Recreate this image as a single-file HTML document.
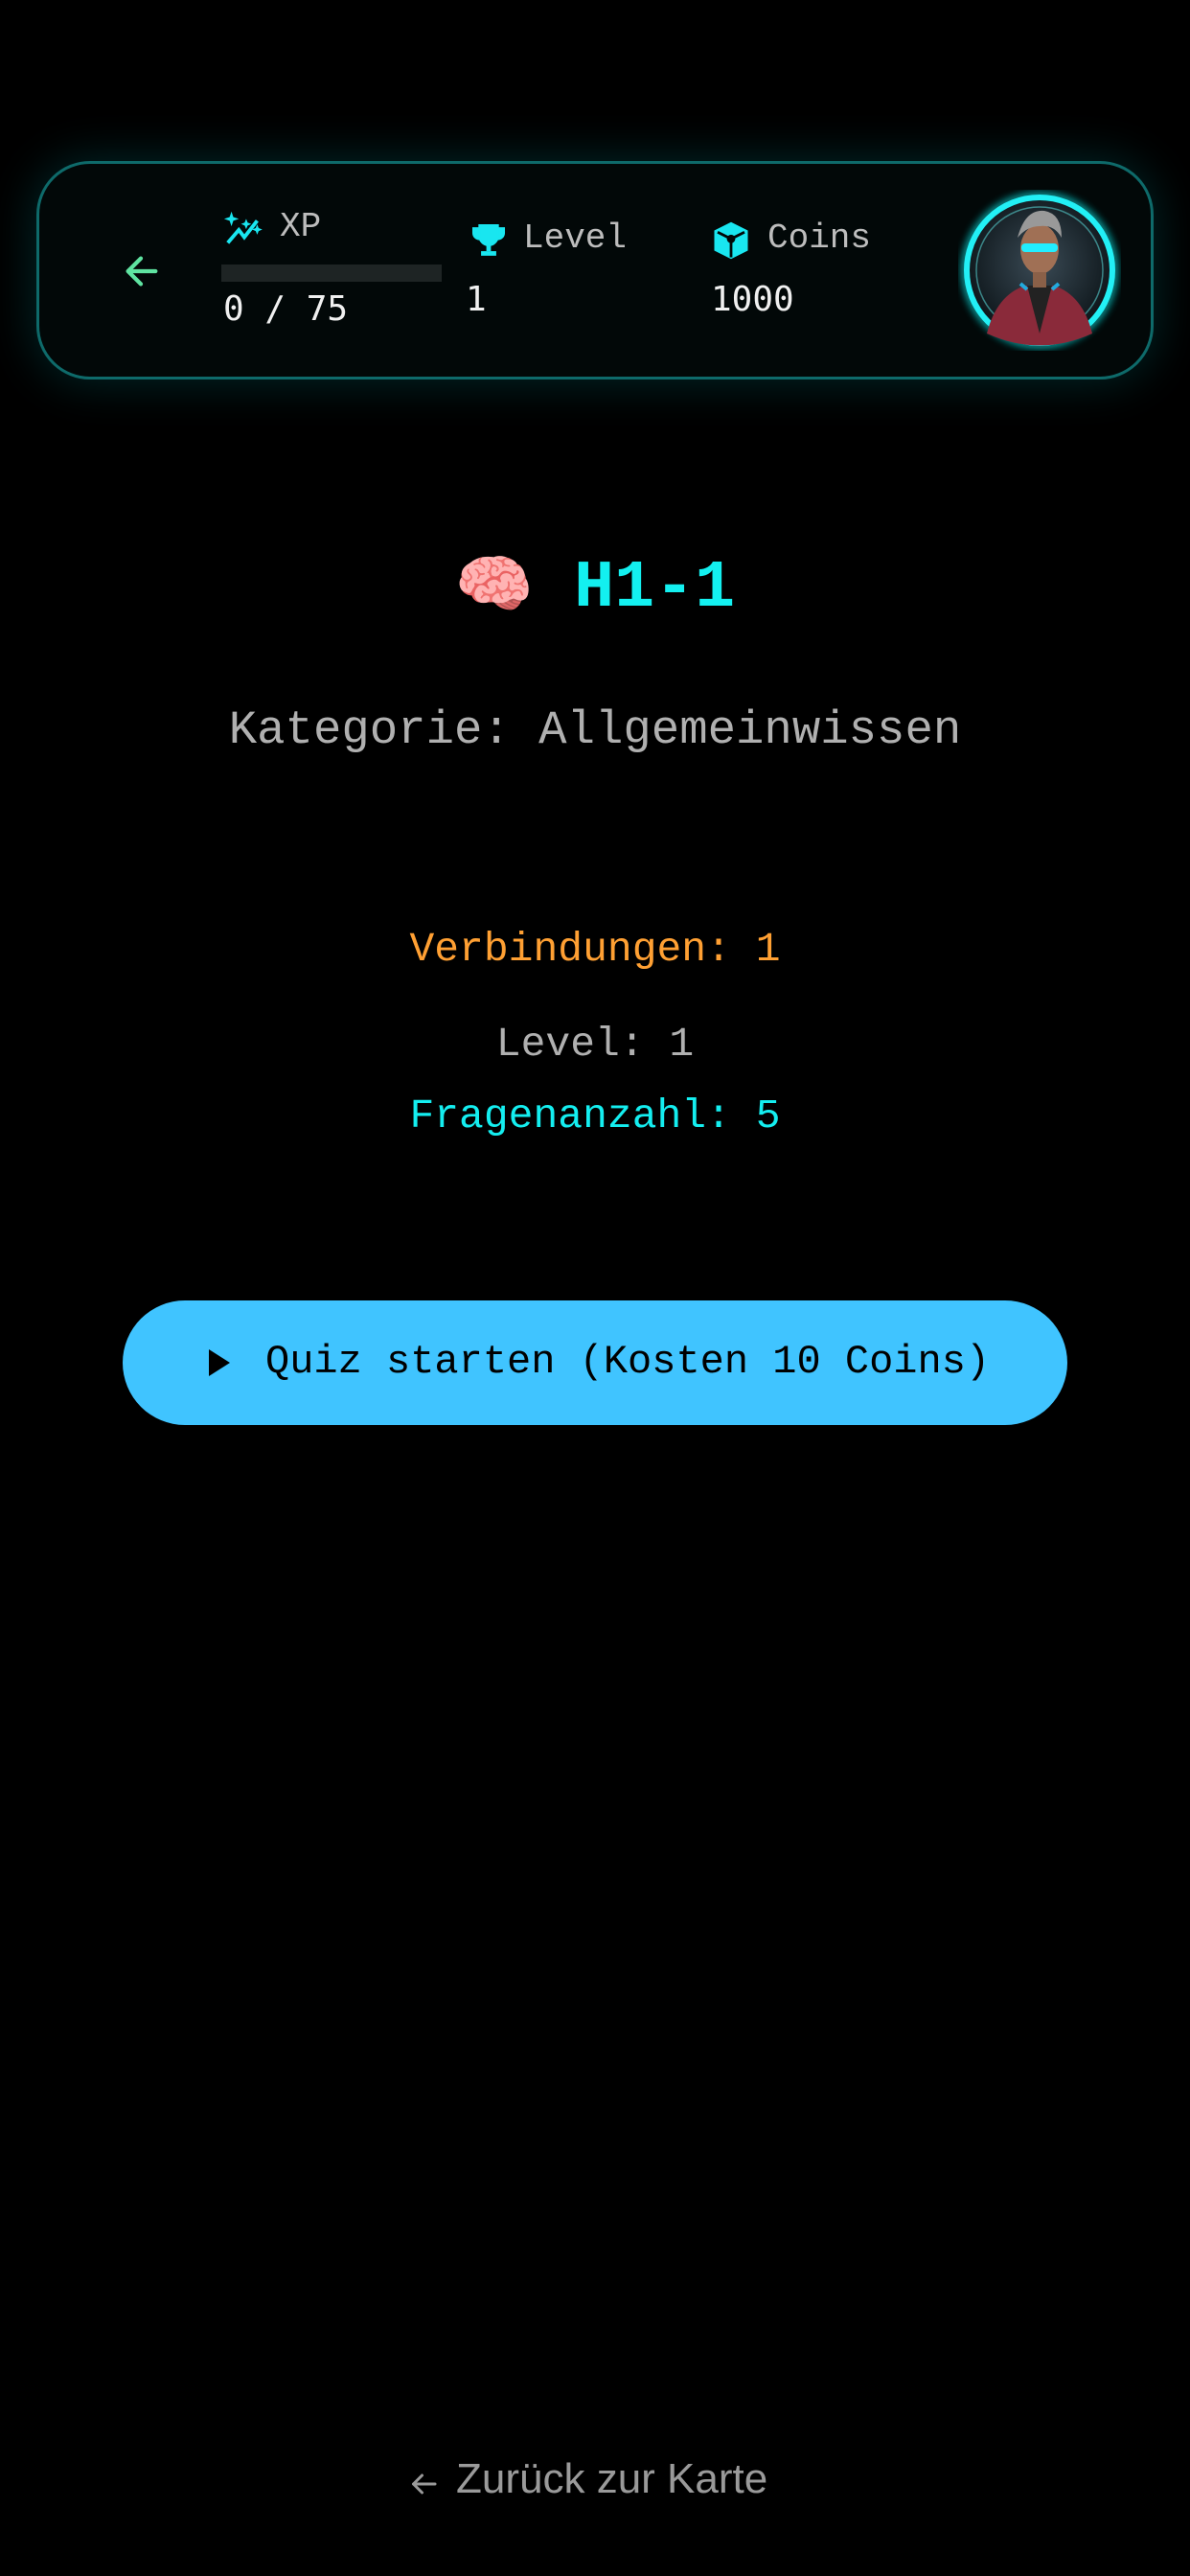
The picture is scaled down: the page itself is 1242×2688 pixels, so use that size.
<!DOCTYPE html>
<html><head><meta charset="utf-8"><style>
*{margin:0;padding:0;box-sizing:border-box}
body{width:1242px;height:2688px;background:#000;position:relative;overflow:hidden;font-family:"Liberation Mono",monospace}
.card{position:absolute;left:38px;top:168px;width:1166px;height:228px;border:3px solid #0e6a6a;border-radius:56px;background:#020808;box-shadow:0 0 50px rgba(0,190,200,0.22)}
.abs{position:absolute}
.lbl{color:#bdbdbd;font-size:36px;font-family:"Liberation Mono",monospace}
.val{color:#f0f0f0;font-size:36px;font-family:"DejaVu Sans Mono",monospace}
.c{position:absolute;left:0;width:1242px;text-align:center}
</style></head><body>
<div class="card"></div>
<svg class="abs" style="left:124px;top:260px" width="46" height="46" viewBox="0 0 24 24"><path d="M20 12H5M12 5l-7 7 7 7" fill="none" stroke="#5fe3a1" stroke-width="2.2" stroke-linecap="round" stroke-linejoin="round"/></svg>
<svg class="abs" style="left:232px;top:218px" width="46" height="40" viewBox="0 0 24 20"><path d="M5 1l1 3 3 1-3 1-1 3-1-3-3-1 3-1z M13 5l.8 2 2 .8-2 .8-.8 2-.8-2-2-.8 2-.8z M19 8l.8 2 2 .8-2 .8-.8 2-.8-2-2-.8 2-.8z" fill="#19e6f0"/><path d="M3 18l6-7 3 4 7-9" fill="none" stroke="#19e6f0" stroke-width="2"/></svg>
<div class="abs lbl" style="left:292px;top:216px">XP</div>
<div class="abs" style="left:231px;top:276px;width:230px;height:18px;background:#1e2424"></div>
<div class="abs val" style="left:233px;top:302px">0 / 75</div>
<svg class="abs" style="left:490px;top:232px" width="40" height="38" viewBox="0 0 24 24"><path d="M6 2h12v7a6 6 0 0 1-12 0z M6 4H2v3a4 4 0 0 0 4 4 M18 4h4v3a4 4 0 0 1-4 4" fill="#19e6f0" stroke="#19e6f0" stroke-width="1.5"/><rect x="10.5" y="14" width="3" height="5" fill="#19e6f0"/><rect x="7" y="19" width="10" height="3" fill="#19e6f0"/></svg>
<div class="abs lbl" style="left:546px;top:228px">Level</div>
<div class="abs val" style="left:486px;top:292px">1</div>
<svg class="abs" style="left:742px;top:230px" width="42" height="42" viewBox="0 0 24 24"><path d="M12 1l10 5v12l-10 5-10-5V6z" fill="#19e6f0"/><circle cx="12" cy="11" r="2.5" fill="#020808"/><path d="M4 7l8 4 8-4 M12 11v11" stroke="#020808" stroke-width="1.6" fill="none"/></svg>
<div class="abs lbl" style="left:801px;top:228px">Coins</div>
<div class="abs val" style="left:742px;top:292px">1000</div>
<svg class="abs" style="left:1000px;top:198px" width="170" height="168" viewBox="0 0 170 168">
<defs><radialGradient id="g" cx="50%" cy="45%" r="55%"><stop offset="0" stop-color="#3a4a55"/><stop offset="1" stop-color="#0c1418"/></radialGradient><filter id="f"><feGaussianBlur stdDeviation="4"/></filter></defs>
<circle cx="85" cy="84" r="78" fill="none" stroke="#1ff" stroke-width="8" filter="url(#f)" opacity=".6"/>
<circle cx="85" cy="84" r="76" fill="url(#g)" stroke="#22f0f5" stroke-width="6"/>
<circle cx="85" cy="84" r="66" fill="none" stroke="#5cc" stroke-width="1.5" opacity=".6"/>
<path d="M30 150 Q40 110 70 100 L100 100 Q130 110 140 150 Q85 175 30 150z" fill="#8a2a3a"/>
<path d="M72 100 L85 150 L98 100z" fill="#222"/>
<path d="M65 98 L72 104 M105 98 L98 104" stroke="#2ad" stroke-width="4"/>
<ellipse cx="85" cy="62" rx="20" ry="26" fill="#a07055"/>
<path d="M62 50 Q70 20 90 22 Q108 25 108 50 Q100 36 85 38 Q72 38 62 50z" fill="#999"/>
<rect x="66" y="56" width="38" height="9" rx="4" fill="#2ef"/>
<rect x="78" y="86" width="14" height="16" fill="#8a6048"/>
</svg>
<div class="c" style="top:572px;font-size:70px;font-weight:bold;color:#13f0f0;font-family:'Liberation Mono',monospace"><span style="font-family:'Noto Color Emoji','DejaVu Sans',sans-serif;font-size:66px;font-weight:normal">🧠</span> H1-1</div>
<div class="c" style="top:734px;font-size:49px;color:#b0b0b0">Kategorie: Allgemeinwissen</div>
<div class="c" style="top:966px;font-size:43px;color:#ffa033">Verbindungen: 1</div>
<div class="c" style="top:1065px;font-size:43px;color:#b0b0b0">Level: 1</div>
<div class="c" style="top:1140px;font-size:43px;color:#14eef0">Fragenanzahl: 5</div>
<div class="abs" style="left:128px;top:1357px;width:986px;height:130px;border-radius:65px;background:#40c4ff"></div>
<svg class="abs" style="left:216px;top:1407px" width="26" height="30" viewBox="0 0 26 30"><path d="M2 1L24 15 2 29z" fill="#000"/></svg>
<div class="abs" style="left:277px;top:1397px;font-size:42px;color:#000;white-space:nowrap">Quiz starten (Kosten 10 Coins)</div>
<svg class="abs" style="left:424px;top:2574px" width="36" height="36" viewBox="0 0 24 24"><path d="M20 12H5M11 6l-6 6 6 6" fill="none" stroke="#9a9a9a" stroke-width="2" stroke-linecap="round" stroke-linejoin="round"/></svg>
<div class="abs" style="left:476px;top:2562px;font-size:44px;color:#9a9a9a;font-family:'Liberation Sans',sans-serif;white-space:nowrap">Zurück zur Karte</div>
</body></html>
